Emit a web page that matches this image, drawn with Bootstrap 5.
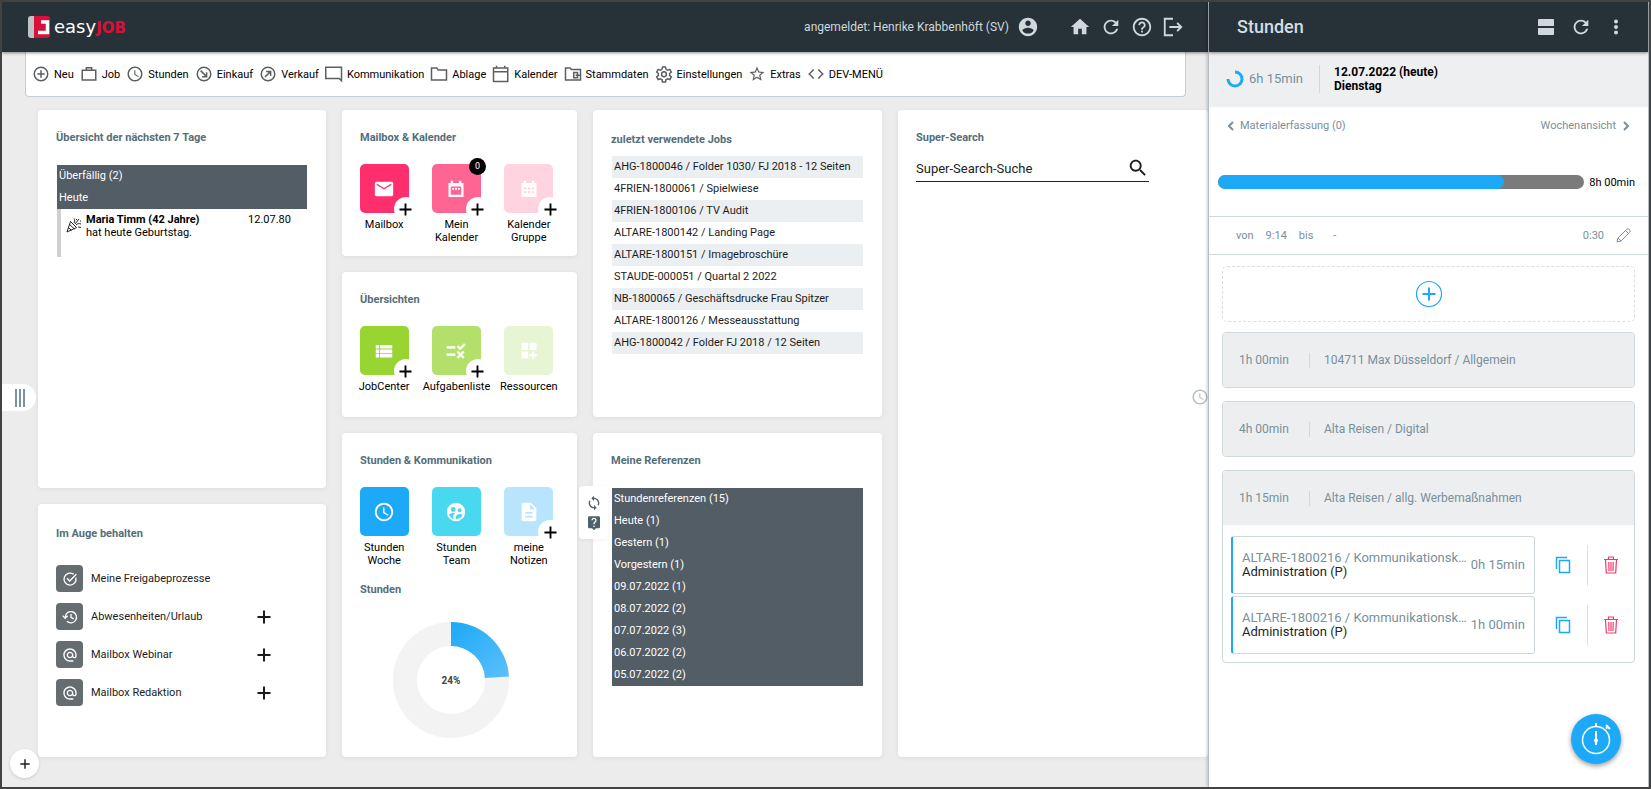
<!DOCTYPE html>
<html lang="de">
<head>
<meta charset="utf-8">
<meta name="viewport" content="width=device-width, initial-scale=1">
<title>easyJOB</title>
<link href="https://cdn.jsdelivr.net/npm/bootstrap@5.3.0/dist/css/bootstrap.min.css" rel="stylesheet">
<style>
:root { --slate: #263238; --tone: #546e7a; --mist: #78909c; --line: #cfd8dc; --sky: #1ba9f8; --panel: #eceef0; }
body { font-family: Roboto, "Liberation Sans", sans-serif; font-size: 11px; line-height: 13px; color: #1c1c1c; background: #ececec; border: 2px solid #424242; min-height: 100vh; }
a { color: inherit; text-decoration: none; }
button { border: 0; padding: 0; background: none; color: inherit; font: inherit; }
svg { display: block; flex: none; }
.ic { width: 18px; height: 18px; fill: currentColor; }
.ic-lg { width: 22px; height: 22px; fill: currentColor; }
.ic-sm { width: 16px; height: 16px; fill: currentColor; }
.ln { fill: none; stroke: currentColor; stroke-width: 2; }
.workspace { min-width: 0; }
.topbar { height: 50px; background: var(--slate); color: #cfd8dc; box-shadow: 0 1px 3px rgba(0,0,0,.45); z-index: 3; }
.brand { margin-left: 2px; }
.brand-easy { font: 18px/20px "DejaVu Sans", sans-serif; color: #fff; }
.brand-job { font: bold 15px/20px "DejaVu Sans", sans-serif; color: #d8103a; }
.user-name { font-size: 12px; }
.tools { gap: 9px; padding-left: 6px; }
.menu { margin: 0 22px 0 23px; min-height: 45px; padding: 0 6px; background: #fff; border: 1px solid #c5ced4; border-top: 0; border-radius: 0 0 4px 4px; color: #000; gap: 6px; }
.menu a { gap: 4px; }
.menu svg { color: #5c5f62; }
.board { display: grid; grid-template-columns: 288fr 235fr 289fr 310fr; gap: 16px; padding: 13px 0 30px 36px; }
.stack { display: grid; gap: 16px; min-width: 0; }
.stack-a { grid-template-rows: 378fr 253fr; }
.stack-b { grid-template-rows: 146fr 145fr 324fr; }
.stack-c { grid-template-rows: 307fr 324fr; }
.tile-card { background: #fff; border-radius: 4px; box-shadow: 0 1px 5px rgba(0,0,0,.07); padding: 21px 18px 0; min-width: 0; }
.ttl { font-size: 11px; line-height: 13px; font-weight: 700; color: var(--tone); margin: 0; }
.ttl-low { margin-top: 2px; }
.dark-list { background: #535d65; color: #fff; margin: 21px 1px 0; }
.rows { list-style: none; padding: 0; }
.rows li { line-height: 22px; padding-left: 2px; white-space: nowrap; overflow: hidden; text-overflow: ellipsis; }
.job-rows { margin: 10px 1px 0; }
.job-rows li:nth-child(odd) { background: #ebeff1; }
.event { border-left: 4px solid #d0d0d0; margin: 0 0 0 1px; min-height: 48px; padding: 4px 17px 0 5px; color: #000; }
.tiles { display: grid; grid-template-columns: repeat(3, 1fr); padding: 20px 12px 0 6px; }
.tile-card.flush { padding-left: 0; padding-right: 0; }
.flush .ttl { margin-left: 18px; }
.tiles a { color: #000; text-align: center; }
.sq { width: 49px; height: 49px; border-radius: 5px; margin: 0 auto 5px; color: #fff; overflow: hidden; }
.holder { position: relative; width: 49px; margin: 0 auto; }
.holder .plus { position: absolute; right: -9px; bottom: -8px; width: 24px; height: 24px; border-radius: 50%; background: #fff; }
.holder .count { position: absolute; right: -5px; top: -6px; width: 17px; height: 17px; border-radius: 50%; background: #000; color: #fff; font-size: 9px; line-height: 17px; }
.ring { margin: 22px auto 0; padding-right: 18px; }
.watch { gap: 11px; margin-top: 25px; }
.watch .box { width: 27px; height: 27px; border-radius: 4px; background: #656d71; color: #fff; }
.watch .more { margin-right: 37px; }
.search-line { border-bottom: 1px solid #222; margin: 11px 41px 0 0; height: 27px; }
.search-line input { border: 0; outline: 0; padding: 0; font-size: 13px; color: #222; min-width: 0; background: none; }
.search-line input::placeholder { color: #222; opacity: 1; }
.handle { position: absolute; left: 0; top: 382px; width: 34px; height: 27px; background: #fff; border-radius: 0 14px 14px 0; color: #7893a5; padding-left: 2px; }
.add-round { position: absolute; left: 8px; bottom: 9px; width: 29px; height: 29px; border-radius: 50%; background: #fff; box-shadow: 0 1px 3px rgba(0,0,0,.15); }
.clock-tab { position: absolute; right: -1px; top: 386px; color: #b4c0c8; }
.float-tools { position: absolute; left: -14px; top: 53px; width: 29px; height: 53px; background: #fff; border-radius: 4px; color: #4d616d; box-shadow: 0 1px 4px rgba(0,0,0,.06); gap: 4px; }
.side { width: 441px; background: #fff; border: solid #b4bec4; border-width: 0 1px; color: var(--mist); box-shadow: -1px 0 3px rgba(0,0,0,.2); z-index: 4; }
.side-title { font-size: 18px; line-height: 22px; font-weight: 500; color: #d5dde1; }
.day { background: #eeeff1; height: 55px; padding: 0 0 2px 17px; }
.day .date { font-size: 12px; line-height: 14px; font-weight: 700; color: #000; border-left: 1px solid var(--line); padding-left: 14px; }
.day .sum { width: 77px; font-size: 13px; gap: 5px; }
.week { padding: 12px 17px 0 18px; }
.week a { gap: 5px; }
.meter { gap: 5px; padding: 0 13px 0 9px; margin: 43px 0 27px; color: #000; }
.meter .progress { height: 14px; border-radius: 7px; background: #7b7b7b; }
.meter .progress-bar { background: var(--sky); border-radius: 7px; }
.span-row { height: 39px; border: solid var(--line); border-width: 1px 0; padding: 0 17px 0 27px; gap: 12px; }
.entries { padding: 11px 13px 0; }
.add-box { height: 56px; border: 1px dashed #dcdfe1; border-radius: 5px; color: var(--sky); margin-bottom: 10px; }
.group { border: 1px solid var(--line); border-radius: 4px; margin-bottom: 13px; overflow: hidden; font-size: 12px; }
.group-head { background: var(--panel); height: 54px; padding-left: 16px; }
.group-head .dur { width: 70px; }
.group-head .name { border-left: 1px solid var(--line); padding-left: 14px; line-height: 15px; }
.bookings { padding: 11px 0 8px 8px; gap: 2px; }
.booking { border: 1px solid var(--line); border-left: 2px solid var(--sky); border-radius: 3px; height: 58px; padding: 0 12px 0 9px; gap: 4px; font-size: 13px; line-height: 14px; min-width: 0; }
.acts { width: 99px; padding-left: 4px; }
.acts .sep { width: 1px; height: 41px; background: #dde2e5; }
.fab { position: absolute; right: 27px; bottom: 23px; width: 50px; height: 50px; border-radius: 50%; background: var(--sky); color: #fff; box-shadow: 0 2px 5px rgba(0,0,0,.4); }
</style>
</head>
<body class="d-flex">
<svg width="0" height="0" class="position-absolute" aria-hidden="true">
<symbol id="i-user" viewBox="0 0 24 24"><path d="M12 2C6.48 2 2 6.48 2 12s4.48 10 10 10 10-4.48 10-10S17.52 2 12 2zm0 3c1.66 0 3 1.34 3 3s-1.34 3-3 3-3-1.34-3-3 1.34-3 3-3zm0 14.2c-2.5 0-4.71-1.28-6-3.22.03-1.99 4-3.08 6-3.08 1.99 0 5.97 1.09 6 3.08-1.29 1.94-3.5 3.22-6 3.22z"/></symbol>
<symbol id="i-home" viewBox="0 0 24 24"><path d="M10 20v-6h4v6h5v-8h3L12 3 2 12h3v8z"/></symbol>
<symbol id="i-refresh" viewBox="0 0 24 24"><path d="M17.65 6.35C16.2 4.9 14.21 4 12 4c-4.42 0-7.99 3.58-7.99 8s3.57 8 7.99 8c3.73 0 6.84-2.55 7.73-6h-2.08c-.82 2.33-3.04 4-5.65 4-3.31 0-6-2.69-6-6s2.69-6 6-6c1.66 0 3.14.69 4.22 1.78L13 11h7V4l-2.35 2.35z"/></symbol>
<symbol id="i-help" viewBox="0 0 24 24"><path d="M11 18h2v-2h-2v2zm1-16C6.48 2 2 6.48 2 12s4.48 10 10 10 10-4.48 10-10S17.52 2 12 2zm0 18c-4.41 0-8-3.59-8-8s3.59-8 8-8 8 3.59 8 8-3.59 8-8 8zm0-14c-2.21 0-4 1.79-4 4h2c0-1.1.9-2 2-2s2 .9 2 2c0 2-3 1.75-3 5h2c0-2.25 3-2.5 3-5 0-2.21-1.79-4-4-4z"/></symbol>
<symbol id="i-logout" viewBox="0 0 24 24"><path class="ln" d="M12 3H3v18h9M8 12h13M16.500 7.500l4.500 4.500-4.500 4.500"/></symbol>
<symbol id="i-clock" viewBox="0 0 24 24"><path d="M11.99 2C6.47 2 2 6.48 2 12s4.47 10 9.99 10C17.52 22 22 17.52 22 12S17.52 2 11.99 2zM12 20c-4.42 0-8-3.58-8-8s3.58-8 8-8 8 3.58 8 8-3.58 8-8 8zm.5-13H11v6l5.25 3.15.75-1.23-4.5-2.67z"/></symbol>
<symbol id="i-new" viewBox="0 0 24 24"><g class="ln"><circle cx="12" cy="12" r="9"/><path d="M12 7v10M7 12h10"/></g></symbol>
<symbol id="i-case" viewBox="0 0 24 24"><path class="ln" d="M3 7h18v13H3zM8.500 7V3.500h7V7"/></symbol>
<symbol id="i-in" viewBox="0 0 24 24"><g class="ln"><circle cx="12" cy="12" r="9"/><path d="M7.500 7.500l8 8M9.500 15.500h6v-6"/></g></symbol>
<symbol id="i-out" viewBox="0 0 24 24"><g class="ln"><circle cx="12" cy="12" r="9"/><path d="M8 16l7.500-7.500M9.500 8.500h6v6"/></g></symbol>
<symbol id="i-chat" viewBox="0 0 24 24"><path class="ln" d="M1 3h21v18l-3-3H1z"/></symbol>
<symbol id="i-folder" viewBox="0 0 24 24"><path class="ln" d="M2 4h7l2 2.500h11V20H2z"/></symbol>
<symbol id="i-cal" viewBox="0 0 24 24"><path class="ln" d="M2 4h19v18H2zM2 9h19M6 1v3M17 1v3"/></symbol>
<symbol id="i-data" viewBox="0 0 24 24"><path class="ln" d="M2 4h6l2 2h12v14H2zM13 10h5v7h-5zM15.500 13.500h6"/></symbol>
<symbol id="i-gear" viewBox="0 0 24 24"><g class="ln"><path d="M10 2.500h4l.6 3 2.300 1.300 2.900-1 2 3.500-2.300 2v2.600l2.300 2-2 3.500-2.900-1-2.300 1.300-.6 3h-4l-.6-3-2.300-1.300-2.900 1-2-3.500 2.300-2v-2.600l-2.300-2 2-3.500 2.900 1 2.300-1.300z"/><circle cx="12" cy="12.300" r="3.200"/></g></symbol>
<symbol id="i-star" viewBox="0 0 24 24"><path d="M22 9.24l-7.19-.62L12 2 9.190 8.630 2 9.240l5.460 4.730L5.820 21 12 17.270 18.180 21l-1.630-7.030L22 9.240zM12 15.400l-3.760 2.270 1-4.280-3.320-2.880 4.380-.38L12 6.100l1.710 4.040 4.380.38-3.320 2.880 1 4.280L12 15.400z"/></symbol>
<symbol id="i-code" viewBox="0 0 24 24"><path class="ln" d="M9 6l-6 6 6 6M15 6l6 6-6 6"/></symbol>
<symbol id="i-mail" viewBox="0 0 24 24"><path d="M20 4H4c-1.1 0-1.990.9-1.990 2L2 18c0 1.1.9 2 2 2h16c1.1 0 2-.9 2-2V6c0-1.1-.9-2-2-2zm0 3.500l-8 5-8-5V6l8 5 8-5v1.500z"/></symbol>
<symbol id="i-month" viewBox="0 0 24 24"><path fill-rule="evenodd" d="M2 4h3V1h3v3h8V1h3v3h3v18.500H2zM5 8.500V19.500h14V8.500zM7 10.500h2.500V13H7zM10.800 10.500h2.500V13h-2.500zM14.600 10.500h2.500V13h-2.500z"/></symbol>
<symbol id="i-grid" viewBox="0 0 24 24"><path fill-rule="evenodd" d="M2 4h3V1h3v3h8V1h3v3h3v18.500H2zM5.500 10v2.500h3V10zM10.500 10v2.500h3V10zM15.500 10v2.500h3V10zM5.500 15v2.500h3V15zM10.500 15v2.500h3V15zM15.500 15v2.500h3V15z"/></symbol>
<symbol id="i-list" viewBox="0 0 24 24"><path d="M1 4h4.500v4.700H1zM6.700 4H23v4.700H6.700zM1 9.900h4.500v4.700H1zM6.700 9.900H23v4.700H6.700zM1 15.800h4.500v4.700H1zM6.700 15.800H23v4.700H6.700z"/></symbol>
<symbol id="i-rule" viewBox="0 0 24 24"><path d="M16.540 11L13 7.460l1.410-1.410 2.120 2.120 4.240-4.240 1.410 1.410L16.540 11zM11 7H2v2h9V7zm10 6.410L19.590 12 17 14.590 14.410 12 13 13.410 15.590 16 13 18.590 14.410 20 17 17.410 19.590 20 21 18.590 18.410 16 21 13.410zM11 15H2v2h9v-2z" stroke="currentColor" stroke-width=".7"/></symbol>
<symbol id="i-widgets" viewBox="0 0 24 24"><path d="M2 1h9v9.500H2zM13 1h9v9.500h-9zM2 12.500h9V22H2zM16 12.500h3v3.500h3.500v3H19v3.500h-3V19h-3.500v-3H16z"/></symbol>
<symbol id="i-team" viewBox="0 0 24 24"><path fill-rule="evenodd" d="M12 2a10 10 0 1 0 0 20 10 10 0 0 0 0-20zM9 6.500a2.700 2.700 0 1 1 0 5.400 2.700 2.700 0 0 1 0-5.400zM16 8a2.100 2.100 0 1 1 0 4.200A2.100 2.100 0 0 1 16 8zM4.500 15c1-1.300 3-2 4.500-2 .8 0 1.600.1 2.300.4-1.500.9-2.300 2-2.300 3.600v2.500c-2.200-.8-3.800-2.300-4.500-4.500zM12 19.800v-2.600c0-1.800 2.500-2.900 4.200-2.900 1.100 0 2.300.4 3.100 1-1.200 2.700-3.800 4.500-7.300 4.500z"/></symbol>
<symbol id="i-note" viewBox="0 0 24 24"><path d="M14 2H6c-1.1 0-1.990.9-1.990 2L4 20c0 1.1.89 2 1.990 2H18c1.1 0 2-.9 2-2V8l-6-6zm2 16H8v-2h8v2zm0-4H8v-2h8v2zm-3-5V3.500L18.500 9H13z"/></symbol>
<symbol id="i-search" viewBox="0 0 24 24"><path d="M15.5 14h-.79l-.28-.27C15.410 12.590 16 11.110 16 9.500 16 5.910 13.090 3 9.500 3S3 5.910 3 9.500 5.910 16 9.500 16c1.610 0 3.090-.59 4.230-1.570l.27.28v.79l5 4.990L20.490 19l-4.990-5zm-6 0C7.010 14 5 11.990 5 9.500S7.010 5 9.500 5 14 7.010 14 9.500 11.990 14 9.500 14z"/></symbol>
<symbol id="i-at" viewBox="0 0 24 24"><path d="M12 1.950c-5.520 0-10 4.480-10 10s4.480 10 10 10h5v-2h-5c-4.340 0-8-3.660-8-8s3.660-8 8-8 8 3.660 8 8v1.430c0 .79-.71 1.570-1.500 1.570s-1.500-.78-1.500-1.570v-1.430c0-2.760-2.240-5-5-5s-5 2.240-5 5 2.240 5 5 5c1.380 0 2.640-.56 3.540-1.470.65.89 1.770 1.470 2.960 1.470 1.970 0 3.500-1.600 3.500-3.570v-1.430c0-5.520-4.480-10-10-10zm0 13c-1.660 0-3-1.340-3-3s1.340-3 3-3 3 1.340 3 3-1.340 3-3 3z"/></symbol>
<symbol id="i-done" viewBox="0 0 24 24"><path class="ln" d="M17.500 5a9 9 0 1 0 3.300 5M7.500 11l4 4L21.500 5"/></symbol>
<symbol id="i-hist" viewBox="0 0 24 24"><path class="ln" d="M4.800 12.500a8.500 8.500 0 1 1 2.600 6M1 10l3.700 4L8.500 10M13.500 7.500v5l4 2.300"/></symbol>
<symbol id="i-sync" viewBox="0 0 24 24"><path d="M12 4V1L8 5l4 4V6c3.310 0 6 2.690 6 6 0 1.010-.25 1.970-.7 2.800l1.460 1.460C19.540 15.030 20 13.570 20 12c0-4.420-3.580-8-8-8zm0 14c-3.310 0-6-2.690-6-6 0-1.010.25-1.970.7-2.800L5.240 7.740C4.460 8.970 4 10.430 4 12c0 4.420 3.580 8 8 8v3l4-4-4-4v3z"/></symbol>
<symbol id="i-faq" viewBox="0 0 24 24"><path d="M19 2H5c-1.110 0-2 .9-2 2v14c0 1.1.89 2 2 2h4l3 3 3-3h4c1.1 0 2-.9 2-2V4c0-1.1-.9-2-2-2zm-6 16h-2v-2h2v2zm2.070-7.750l-.9.92C13.450 11.900 13 12.500 13 14h-2v-.5c0-1.1.45-2.100 1.170-2.830l1.240-1.260c.37-.36.59-.86.59-1.410 0-1.1-.9-2-2-2s-2 .9-2 2H8c0-2.210 1.790-4 4-4s4 1.790 4 4c0 .88-.36 1.680-.93 2.250z"/></symbol>
<symbol id="i-plus" viewBox="0 0 14 14"><path d="M7 .5v13M.5 7h13" fill="none" stroke="currentColor" stroke-width="2"/></symbol>
<symbol id="i-copy" viewBox="0 0 16 18"><path fill="none" stroke="#1ba9f8" stroke-width="1.500" d="M4.500 4.500h10v12h-10zM1.500 13V1.500H12"/></symbol>
<symbol id="i-trash" viewBox="0 0 14 18"><path fill="none" stroke="#ee3a6a" stroke-width="1.200" d="M0 3.500h14M4.500 3.500v-2.500h5v2.500M1.500 3.500l.8 13.500h9.400l.8-13.500M4.800 6l.2 9M7 6v9M9.200 6L9 15"/></symbol>
</svg>

<div class="workspace flex-grow-1 d-flex flex-column position-relative">
  <header class="topbar d-flex align-items-center ps-4 pe-4">
    <a href="#" class="brand d-flex align-items-center" aria-label="easyJOB">
      <svg class="me-1" width="22" height="22" viewBox="0 0 22 22"><path d="M3 0h4v22H3a3 3 0 0 1-3-3V3a3 3 0 0 1 3-3z" fill="#bfc3c8"/><path d="M6 0h13a3 3 0 0 1 3 3v16a3 3 0 0 1-3 3H6z" fill="#d8103a"/><path d="M13 6h6.500v10.500H10" fill="none" stroke="#fff" stroke-width="3.500"/></svg>
      <span class="d-flex align-items-baseline"><span class="brand-easy">easy</span><span class="brand-job">JOB</span></span>
    </a>
    <div class="ms-auto d-flex align-items-center gap-2">
      <span class="user-name">angemeldet: Henrike Krabbenhöft (SV)</span>
      <svg class="ic-lg"><use href="#i-user"/></svg>
    </div>
    <nav class="tools d-flex align-items-center ms-4">
      <a href="#" aria-label="Start"><svg class="ic-lg"><use href="#i-home"/></svg></a>
      <a href="#" aria-label="Aktualisieren"><svg class="ic-lg"><use href="#i-refresh"/></svg></a>
      <a href="#" aria-label="Hilfe"><svg class="ic-lg"><use href="#i-help"/></svg></a>
      <a href="#" aria-label="Abmelden"><svg class="ic-lg"><use href="#i-logout"/></svg></a>
    </nav>
  </header>

  <nav class="menu d-flex align-items-center">
    <a href="#" class="d-flex align-items-center"><svg class="ic"><use href="#i-new"/></svg>Neu</a>
    <a href="#" class="d-flex align-items-center"><svg class="ic"><use href="#i-case"/></svg>Job</a>
    <a href="#" class="d-flex align-items-center"><svg class="ic"><use href="#i-clock"/></svg>Stunden</a>
    <a href="#" class="d-flex align-items-center"><svg class="ic"><use href="#i-in"/></svg>Einkauf</a>
    <a href="#" class="d-flex align-items-center"><svg class="ic"><use href="#i-out"/></svg>Verkauf</a>
    <a href="#" class="d-flex align-items-center"><svg class="ic"><use href="#i-chat"/></svg>Kommunikation</a>
    <a href="#" class="d-flex align-items-center"><svg class="ic"><use href="#i-folder"/></svg>Ablage</a>
    <a href="#" class="d-flex align-items-center"><svg class="ic"><use href="#i-cal"/></svg>Kalender</a>
    <a href="#" class="d-flex align-items-center"><svg class="ic"><use href="#i-data"/></svg>Stammdaten</a>
    <a href="#" class="d-flex align-items-center"><svg class="ic"><use href="#i-gear"/></svg>Einstellungen</a>
    <a href="#" class="d-flex align-items-center"><svg class="ic"><use href="#i-star"/></svg>Extras</a>
    <a href="#" class="d-flex align-items-center"><svg class="ic"><use href="#i-code"/></svg>DEV-MENÜ</a>
  </nav>

  <main class="board flex-grow-1">
    <div class="stack stack-a">
      <section class="tile-card">
        <h2 class="ttl">Übersicht der nächsten 7 Tage</h2>
        <ul class="rows dark-list"><li>Überfällig (2)</li><li>Heute</li></ul>
        <div class="event d-flex">
          <svg width="16" height="16" viewBox="0 0 16 16" class="me-1 mt-1" fill="none" stroke="#222"><path d="M4.500 4.500L1 15l9.500-4.500zM3.800 7.500l4.700 4.700M2.500 10.500l3 3M8 6c1-1.500 1-3 0-4.500M9 7l4-5M10 8c1.500-1.500 3-1.800 5-1M10.500 2v1M14 4h1M12 10l3 .5"/></svg>
          <div><strong>Maria Timm (42 Jahre)</strong><br>hat heute Geburtstag.</div>
          <span class="ms-auto">12.07.80</span>
        </div>
      </section>
      <section class="tile-card">
        <h2 class="ttl ttl-low">Im Auge behalten</h2>
        <div class="watch d-flex flex-column">
          <div class="d-flex align-items-center gap-2"><span class="box d-flex align-items-center justify-content-center"><svg class="ic-sm"><use href="#i-done"/></svg></span><a href="#">Meine Freigabeprozesse</a></div>
          <div class="d-flex align-items-center gap-2"><span class="box d-flex align-items-center justify-content-center"><svg class="ic-sm"><use href="#i-hist"/></svg></span><a href="#">Abwesenheiten/Urlaub</a><button class="more ms-auto" aria-label="Hinzufügen"><svg width="14" height="14"><use href="#i-plus"/></svg></button></div>
          <div class="d-flex align-items-center gap-2"><span class="box d-flex align-items-center justify-content-center"><svg class="ic-sm"><use href="#i-at"/></svg></span><a href="#">Mailbox Webinar</a><button class="more ms-auto" aria-label="Hinzufügen"><svg width="14" height="14"><use href="#i-plus"/></svg></button></div>
          <div class="d-flex align-items-center gap-2"><span class="box d-flex align-items-center justify-content-center"><svg class="ic-sm"><use href="#i-at"/></svg></span><a href="#">Mailbox Redaktion</a><button class="more ms-auto" aria-label="Hinzufügen"><svg width="14" height="14"><use href="#i-plus"/></svg></button></div>
        </div>
      </section>
    </div>

    <div class="stack stack-b">
      <section class="tile-card flush">
        <h2 class="ttl">Mailbox &amp; Kalender</h2>
        <div class="tiles">
          <a href="#"><div class="holder"><div class="sq d-flex align-items-center justify-content-center" style="background:#ff2f6e"><svg class="ic-lg"><use href="#i-mail"/></svg></div><span class="plus d-flex align-items-center justify-content-center"><svg width="13" height="13"><use href="#i-plus"/></svg></span></div>Mailbox</a>
          <a href="#"><div class="holder"><div class="sq d-flex align-items-center justify-content-center" style="background:#ff6592"><svg class="ic"><use href="#i-month"/></svg></div><span class="plus d-flex align-items-center justify-content-center"><svg width="13" height="13"><use href="#i-plus"/></svg></span><span class="count">0</span></div>Mein<br>Kalender</a>
          <a href="#"><div class="holder"><div class="sq d-flex align-items-center justify-content-center" style="background:#ffd3df"><svg class="ic"><use href="#i-grid"/></svg></div><span class="plus d-flex align-items-center justify-content-center"><svg width="13" height="13"><use href="#i-plus"/></svg></span></div>Kalender<br>Gruppe</a>
        </div>
      </section>
      <section class="tile-card flush">
        <h2 class="ttl">Übersichten</h2>
        <div class="tiles">
          <a href="#"><div class="holder"><div class="sq d-flex align-items-center justify-content-center" style="background:#98d432"><svg class="ic"><use href="#i-list"/></svg></div><span class="plus d-flex align-items-center justify-content-center"><svg width="13" height="13"><use href="#i-plus"/></svg></span></div>JobCenter</a>
          <a href="#"><div class="holder"><div class="sq d-flex align-items-center justify-content-center" style="background:#b2e06a"><svg class="ic-lg"><use href="#i-rule"/></svg></div><span class="plus d-flex align-items-center justify-content-center"><svg width="13" height="13"><use href="#i-plus"/></svg></span></div>Aufgabenliste</a>
          <a href="#"><div class="holder"><div class="sq d-flex align-items-center justify-content-center" style="background:#e8f5d5"><svg class="ic"><use href="#i-widgets"/></svg></div></div>Ressourcen</a>
        </div>
      </section>
      <section class="tile-card flush">
        <h2 class="ttl">Stunden &amp; Kommunikation</h2>
        <div class="tiles">
          <a href="#"><div class="holder"><div class="sq d-flex align-items-center justify-content-center" style="background:#1ba9f8"><svg class="ic-lg"><use href="#i-clock"/></svg></div></div>Stunden<br>Woche</a>
          <a href="#"><div class="holder"><div class="sq d-flex align-items-center justify-content-center" style="background:#48d8ef"><svg class="ic-lg"><use href="#i-team"/></svg></div></div>Stunden<br>Team</a>
          <a href="#"><div class="holder"><div class="sq d-flex align-items-center justify-content-center" style="background:#b8e5fd"><svg class="ic-lg"><use href="#i-note"/></svg></div><span class="plus d-flex align-items-center justify-content-center"><svg width="13" height="13"><use href="#i-plus"/></svg></span></div>meine<br>Notizen</a>
        </div>
        <h3 class="ttl mt-3">Stunden</h3>
        <svg class="ring" width="134" height="124" viewBox="0 0 116 124">
          <defs><linearGradient id="arc" x1="0" y1="0" x2="1" y2="1"><stop offset="0" stop-color="#1ba9f8"/><stop offset="1" stop-color="#5cc0fa"/></linearGradient></defs>
          <circle cx="58" cy="62" r="46" fill="none" stroke="#f3f3f3" stroke-width="24"/>
          <path d="M58 4a58 58 0 0 1 57.900 54.400l-24 1.500A34 34 0 0 0 58 28z" fill="url(#arc)"/>
          <text x="58" y="66" text-anchor="middle" font-size="10" font-weight="700" fill="#444">24%</text>
        </svg>
      </section>
    </div>

    <div class="stack stack-c">
      <section class="tile-card">
        <h2 class="ttl ttl-low">zuletzt verwendete Jobs</h2>
        <ul class="rows job-rows">
          <li>AHG-1800046 / Folder 1030/ FJ 2018 - 12 Seiten</li><li>4FRIEN-1800061 / Spielwiese</li><li>4FRIEN-1800106 / TV Audit</li><li>ALTARE-1800142 / Landing Page</li><li>ALTARE-1800151 / Imagebroschüre</li><li>STAUDE-000051 / Quartal 2 2022</li><li>NB-1800065 / Geschäftsdrucke Frau Spitzer</li><li>ALTARE-1800126 / Messeausstattung</li><li>AHG-1800042 / Folder FJ 2018 / 12 Seiten</li>
        </ul>
      </section>
      <section class="tile-card position-relative">
        <div class="float-tools d-flex flex-column align-items-center justify-content-center">
          <button aria-label="Neu laden"><svg class="ic-sm"><use href="#i-sync"/></svg></button>
          <button aria-label="Hilfe"><svg class="ic-sm"><use href="#i-faq"/></svg></button>
        </div>
        <h2 class="ttl">Meine Referenzen</h2>
        <ul class="rows dark-list">
          <li>Stundenreferenzen (15)</li><li>Heute (1)</li><li>Gestern (1)</li><li>Vorgestern (1)</li><li>09.07.2022 (1)</li><li>08.07.2022 (2)</li><li>07.07.2022 (3)</li><li>06.07.2022 (2)</li><li>05.07.2022 (2)</li>
        </ul>
      </section>
    </div>

    <section class="tile-card">
      <h2 class="ttl">Super-Search</h2>
      <div class="search-line d-flex align-items-center">
        <input type="text" class="flex-grow-1" placeholder="Super-Search-Suche" aria-label="Super-Search-Suche">
        <button aria-label="Suchen"><svg class="ic-lg"><use href="#i-search"/></svg></button>
      </div>
    </section>
  </main>

  <button class="handle d-flex align-items-center justify-content-center" aria-label="Navigation"><svg width="10" height="18"><path d="M1 0v18M5 0v18M9 0v18" stroke="currentColor" stroke-width="2"/></svg></button>
  <button class="add-round d-flex align-items-center justify-content-center" aria-label="Hinzufügen"><svg width="10" height="10"><use href="#i-plus"/></svg></button>
  <button class="clock-tab" aria-label="Stunden"><svg class="ic"><use href="#i-clock"/></svg></button>
</div>

<aside class="side flex-shrink-0 d-flex flex-column position-relative">
  <header class="topbar d-flex align-items-center ps-4 pe-4">
    <h1 class="side-title mb-0 ms-1">Stunden</h1>
    <div class="ms-auto d-flex align-items-center gap-3">
      <button aria-label="Ansicht"><svg width="16" height="16"><path d="M1 0h14a1 1 0 0 1 1 1v6H0V1a1 1 0 0 1 1-1zM0 9h16v6a1 1 0 0 1-1 1H1a1 1 0 0 1-1-1z" fill="currentColor"/></svg></button>
      <button aria-label="Aktualisieren"><svg class="ic-lg"><use href="#i-refresh"/></svg></button>
      <button aria-label="Mehr"><svg width="16" height="16"><circle cx="8" cy="2.500" r="2" fill="currentColor"/><circle cx="8" cy="8" r="2" fill="currentColor"/><circle cx="8" cy="13.500" r="2" fill="currentColor"/></svg></button>
    </div>
  </header>
  <div class="day d-flex align-items-center">
    <div class="sum d-flex align-items-center flex-shrink-0 me-3"><svg width="18" height="18" viewBox="0 0 18 18"><path d="M9 2A7 7 0 1 1 2 9" fill="none" stroke="#1ba9f8" stroke-width="3"/></svg><span class="text-nowrap">6h 15min</span></div>
    <div class="date">12.07.2022 (heute)<br>Dienstag</div>
  </div>
  <div class="week d-flex justify-content-between">
    <a href="#" class="d-flex align-items-center"><svg width="8" height="10"><path d="M6 1L2 5l4 4" fill="none" stroke="currentColor" stroke-width="2"/></svg>Materialerfassung (0)</a>
    <a href="#" class="d-flex align-items-center">Wochenansicht<svg width="10" height="10"><path d="M3 1l4 4-4 4" fill="none" stroke="currentColor" stroke-width="2"/></svg></a>
  </div>
  <div class="meter d-flex align-items-center">
    <div class="progress flex-grow-1" role="progressbar" aria-valuenow="78" aria-valuemin="0" aria-valuemax="100"><div class="progress-bar" style="width:78.125%"></div></div>
    <span>8h 00min</span>
  </div>
  <div class="span-row d-flex align-items-center">
    <span>von</span><span>9:14</span><span>bis</span><span class="ms-2">-</span>
    <span class="ms-auto">0:30</span>
    <button aria-label="Bearbeiten"><svg width="15" height="15" viewBox="0 0 15 15" fill="none" stroke="currentColor"><path d="M1 14l1-4L10.500 1.500a1.800 1.800 0 0 1 3 3L5 13zM2 10l3 3M9.500 2.500l3 3"/></svg></button>
  </div>
  <div class="entries">
    <button class="add-box w-100 d-flex align-items-center justify-content-center" aria-label="Eintrag hinzufügen"><svg width="28" height="28" viewBox="0 0 28 28" fill="none" stroke="currentColor"><circle cx="14" cy="14" r="12.500" stroke-width="1.200"/><path d="M14 7.500v13M7.500 14h13" stroke-width="2"/></svg></button>
    <section class="group"><div class="group-head d-flex align-items-center"><span class="dur">1h 00min</span><span class="name">104711 Max Düsseldorf / Allgemein</span></div></section>
    <section class="group"><div class="group-head d-flex align-items-center"><span class="dur">4h 00min</span><span class="name">Alta Reisen / Digital</span></div></section>
    <section class="group">
      <div class="group-head d-flex align-items-center"><span class="dur">1h 15min</span><span class="name">Alta Reisen / allg. Werbemaßnahmen</span></div>
      <div class="bookings d-flex flex-column">
        <div class="d-flex">
          <div class="booking flex-grow-1 d-flex align-items-center"><div class="flex-grow-1 text-nowrap"><div>ALTARE-1800216 / Kommunikationsk…</div><div class="text-dark">Administration (P)</div></div><span class="text-nowrap">0h 15min</span></div>
          <div class="acts flex-shrink-0 d-flex align-items-center justify-content-evenly"><button aria-label="Kopieren"><svg width="16" height="18"><use href="#i-copy"/></svg></button><span class="sep"></span><button aria-label="Löschen"><svg width="14" height="18"><use href="#i-trash"/></svg></button></div>
        </div>
        <div class="d-flex">
          <div class="booking flex-grow-1 d-flex align-items-center"><div class="flex-grow-1 text-nowrap"><div>ALTARE-1800216 / Kommunikationsk…</div><div class="text-dark">Administration (P)</div></div><span class="text-nowrap">1h 00min</span></div>
          <div class="acts flex-shrink-0 d-flex align-items-center justify-content-evenly"><button aria-label="Kopieren"><svg width="16" height="18"><use href="#i-copy"/></svg></button><span class="sep"></span><button aria-label="Löschen"><svg width="14" height="18"><use href="#i-trash"/></svg></button></div>
        </div>
      </div>
    </section>
  </div>
  <button class="fab d-flex align-items-center justify-content-center" aria-label="Stoppuhr"><svg width="32" height="34" viewBox="0 0 32 34" fill="none" stroke="#fff"><circle cx="16" cy="18" r="13.500" stroke-width="1.500"/><path d="M16 1v4M26 6.500l2.500-2.500M26 3l4 4M16 9v14" stroke-width="2"/><circle cx="16" cy="18.500" r="2" fill="#fff" stroke="none"/></svg></button>
</aside>
<script src="https://cdn.jsdelivr.net/npm/bootstrap@5.3.0/dist/js/bootstrap.bundle.min.js"></script>
</body>
</html>
